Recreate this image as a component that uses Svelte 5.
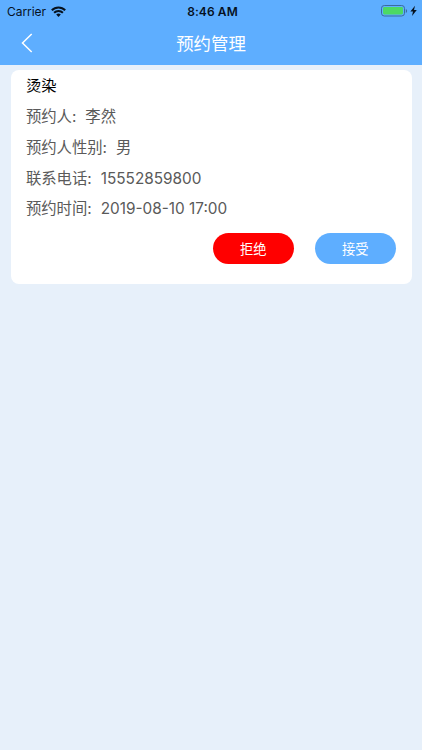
<script lang="ts">
  let { title = "预约管理" } = $props();

  const booking = {
    service: "烫染",
    rows: [
      { label: "预约人", value: "李然" },
      { label: "预约人性别", value: "男" },
      { label: "联系电话", value: "15552859800" },
      { label: "预约时间", value: "2019-08-10 17:00" },
    ],
  };
</script>

<div class="screen">
  <header>
    <div class="status_bar">
      <div class="carrier">
        Carrier
        <svg width="15" height="11" viewBox="0 0 15 11" fill="none" stroke="#06121f" stroke-width="2">
          <path d="M0.8 4.2a9.4 9.4 0 0 1 13.4 0M3.1 6.8a6.2 6.2 0 0 1 8.8 0" />
          <path d="M7.5 10.9 5.2 8.6a3.3 3.3 0 0 1 4.6 0z" fill="#06121f" stroke="none" />
        </svg>
      </div>
      <div class="time">8:46 AM</div>
      <div class="power">
        <svg width="36" height="12" viewBox="0 0 36 12">
          <rect x="0.5" y="0.5" width="23" height="10.5" rx="2.8" fill="none" stroke="#3b6c9e" />
          <rect x="2" y="2" width="20" height="7.5" rx="1.4" fill="#4cd964" />
          <path d="M24.8 4v4c1.8-.8 1.8-3.2 0-4z" fill="#3b6c9e" />
          <path d="M34 0.8 29.4 6.6h2.6l-1 4.4 4.8-6h-2.8z" fill="#06121f" />
        </svg>
      </div>
    </div>
    <div class="nav_bar">
      <button class="back" aria-label="返回">
        <svg width="12" height="20" viewBox="0 0 12 20" fill="none" stroke="#fff" stroke-width="1.5">
          <path d="M10.7 1 1.5 10l9.2 9" />
        </svg>
      </button>
      <h1>{title}</h1>
    </div>
  </header>

  <div class="card">
    <h2>{booking.service}</h2>
    {#each booking.rows as row}
      <div class="row"><span class="label">{row.label}:</span><span>{row.value}</span></div>
    {/each}
    <div class="actions">
      <button class="action reject">拒绝</button>
      <button class="action accept">接受</button>
    </div>
  </div>
</div>

<style>
  :global(body) {
    background: #e7f0fa;
  }

  .screen {
    min-height: 750px;
    font-family: Inter, "Noto Sans CJK SC", sans-serif;
  }

  header {
    background: #5eaeff;
    height: 65.4px;
  }

  .status_bar {
    display: grid;
    grid-template-columns: 1fr auto 1fr;
    align-items: center;
    height: 22px;
    padding: 0 5px 0 7px;
    font-size: 12px;
    color: #06121f;
  }

  .carrier {
    display: flex;
    align-items: center;
    gap: 5px;
    letter-spacing: -0.05px;
  }

  .time {
    padding-left: 1px;
    font-weight: 600;
    letter-spacing: 0.1px;
  }

  .power {
    display: flex;
    justify-content: flex-end;
  }

  .nav_bar {
    display: grid;
    grid-template-columns: 60px 1fr 60px;
    align-items: center;
    height: 41px;
  }

  button {
    border: none;
    padding: 0;
    font-family: inherit;
  }

  .back {
    display: flex;
    padding-left: 21px;
    background: none;
  }

  h1 {
    margin: 0;
    text-align: center;
    font-size: 17.4px;
    font-weight: 400;
    color: #fff;
  }

  .card {
    box-sizing: border-box;
    height: 213.6px;
    margin: 5px 10.5px 0;
    padding: 0 15.4px;
    border-radius: 8px;
    background: #fff;
  }

  h2 {
    margin: 0;
    font-size: 15.3px;
    font-weight: 400;
    line-height: 31px;
    color: #000;
  }

  .row {
    display: flex;
    height: 30.6px;
    line-height: 31px;
    font-size: 15.35px;
    color: #5a5a5a;
  }

  .label {
    margin-right: 9px;
  }

  .actions {
    display: flex;
    justify-content: flex-end;
    gap: 20.5px;
    margin-top: 9.4px;
  }

  .action {
    width: 81.5px;
    height: 30.5px;
    border-radius: 16px;
    font-size: 13.3px;
    color: #fff;
  }

  .reject {
    background: #f00;
  }

  .accept {
    background: #5eaeff;
  }
</style>
